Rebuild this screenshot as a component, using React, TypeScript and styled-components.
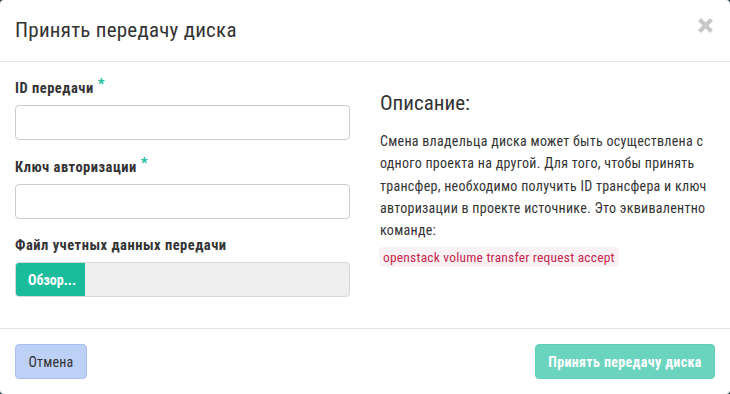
import React from "react";
import styled, { createGlobalStyle } from "styled-components";

const GlobalStyle = createGlobalStyle`
  html, body { margin: 0; padding: 0; background: #24423f; }
  * { box-sizing: border-box; }
  body { font-family: "Roboto Condensed", "Roboto", sans-serif; color: #333; }
`;

const Modal = styled.div`
  width: 730px;
  height: 394px;
  background: #fff;
  border-radius: 4px;
  overflow: hidden;
  display: flex;
  flex-direction: column;
`;

const Header = styled.div`
  height: 63px;
  border-bottom: 1px solid #e5e5e5;
  display: flex;
  align-items: center;
  justify-content: space-between;
  padding: 0 16px 0 15px;
`;

const Title = styled.h4`
  margin: 0;
  font-size: 21px;
  font-weight: 400;
  letter-spacing: 0.25px;
  color: #333;
  line-height: 1;
`;

const CloseButton = styled.button`
  border: 0;
  background: transparent;
  padding: 0;
  width: 17px;
  height: 17px;
  display: flex;
  cursor: pointer;
  margin-top: -10px;
`;

const Body = styled.div`
  display: grid;
  grid-template-columns: 335px 335px;
  column-gap: 30px;
  padding: 15px 15px 15px 15px;
  border-bottom: 1px solid #e5e5e5;
`;

const Column = styled.div`
  display: flex;
  flex-direction: column;
`;

const FormGroup = styled.div`
  display: flex;
  flex-direction: column;
  margin-bottom: 16px;
`;

const Label = styled.label`
  font-size: 14.5px;
  font-weight: 700;
  letter-spacing: 0.5px;
  line-height: 22px;
  margin-bottom: 5px;
  color: #333;
`;

const Required = styled.span`
  color: #1abc9c;
  font-size: 15px;
  font-weight: 700;
  position: relative;
  top: -4px;
  margin-left: 4px;
`;

const Input = styled.input`
  height: 35px;
  width: 100%;
  border: 1px solid #cccccc;
  border-radius: 4px;
  padding: 6px 12px;
  font-family: inherit;
  font-size: 14px;
  background: #fff;
`;

const FileRow = styled.div`
  display: flex;
  height: 35px;
  border: 1px solid #d8d8d8;
  border-radius: 4px;
  overflow: hidden;
  background: #eeeeee;
`;

const FileButton = styled.span`
  width: 70px;
  background: #1abc9c;
  color: #fff;
  font-size: 14px;
  font-weight: 700;
  display: flex;
  align-items: center;
  justify-content: center;
  padding-left: 4px;
  margin: -1px 0 -1px -1px;
  border-radius: 4px 0 0 4px;
`;

const Heading = styled.h3`
  margin: 14px 0 14px 0;
  font-size: 21px;
  font-weight: 400;
  line-height: 25px;
  color: #333;
`;

const Paragraph = styled.p`
  margin: 0 0 6px 0;
  font-size: 14px;
  letter-spacing: 0.28px;
  line-height: 22.3px;
  color: #333;
`;

const Code = styled.code`
  align-self: flex-start;
  margin-left: -1px;
  font-family: "Roboto Condensed", "Roboto", sans-serif;
  font-size: 13.5px;
  letter-spacing: 0.2px;
  line-height: 20px;
  padding: 0 4px;
  color: #c7254e;
  background: #f9f2f4;
  border-radius: 4px;
`;

const Footer = styled.div`
  flex: 1;
  display: flex;
  justify-content: space-between;
  align-items: flex-start;
  padding: 15px;
`;

const Button = styled.button<{ $variant: "cancel" | "primary" }>`
  height: 35px;
  padding: 0 12px;
  border-radius: 4px;
  font-family: inherit;
  font-size: 14px;
  letter-spacing: ${(p) => (p.$variant === "primary" ? "0.35px" : "0.2px")};
  font-weight: ${(p) => (p.$variant === "primary" ? 700 : 400)};
  border: 1px solid ${(p) => (p.$variant === "primary" ? "#5fcfb8" : "#a9c1f1")};
  background: ${(p) => (p.$variant === "primary" ? "#6bd4bf" : "#bdd0f5")};
  color: ${(p) => (p.$variant === "primary" ? "#fff" : "#333")};
  width: ${(p) => (p.$variant === "primary" ? "180px" : "72px")};
  cursor: pointer;
`;

export default function App() {
  return (
    <>
      <GlobalStyle />
      <Modal>
        <Header>
          <Title>Принять передачу диска</Title>
          <CloseButton aria-label="Закрыть">
            <svg width="17" height="17" viewBox="0 0 17 17">
              <path d="M2.5 2.5 L14.5 14.5 M14.5 2.5 L2.5 14.5" stroke="#c8c8c8" strokeWidth="4.2" />
            </svg>
          </CloseButton>
        </Header>
        <Body>
          <Column>
            <FormGroup>
              <Label>
                ID передачи<Required>*</Required>
              </Label>
              <Input />
            </FormGroup>
            <FormGroup>
              <Label>
                Ключ авторизации<Required>*</Required>
              </Label>
              <Input />
            </FormGroup>
            <FormGroup>
              <Label>Файл учетных данных передачи</Label>
              <FileRow>
                <FileButton>Обзор...</FileButton>
              </FileRow>
            </FormGroup>
          </Column>
          <Column>
            <Heading>Описание:</Heading>
            <Paragraph>
              Смена владельца диска может быть осуществлена с одного проекта на другой. Для того,
              чтобы принять трансфер, необходимо получить ID трансфера и ключ авторизации в проекте
              источнике. Это эквивалентно команде:
            </Paragraph>
            <Code>openstack volume transfer request accept</Code>
          </Column>
        </Body>
        <Footer>
          <Button $variant="cancel">Отмена</Button>
          <Button $variant="primary">Принять передачу диска</Button>
        </Footer>
      </Modal>
    </>
  );
}
